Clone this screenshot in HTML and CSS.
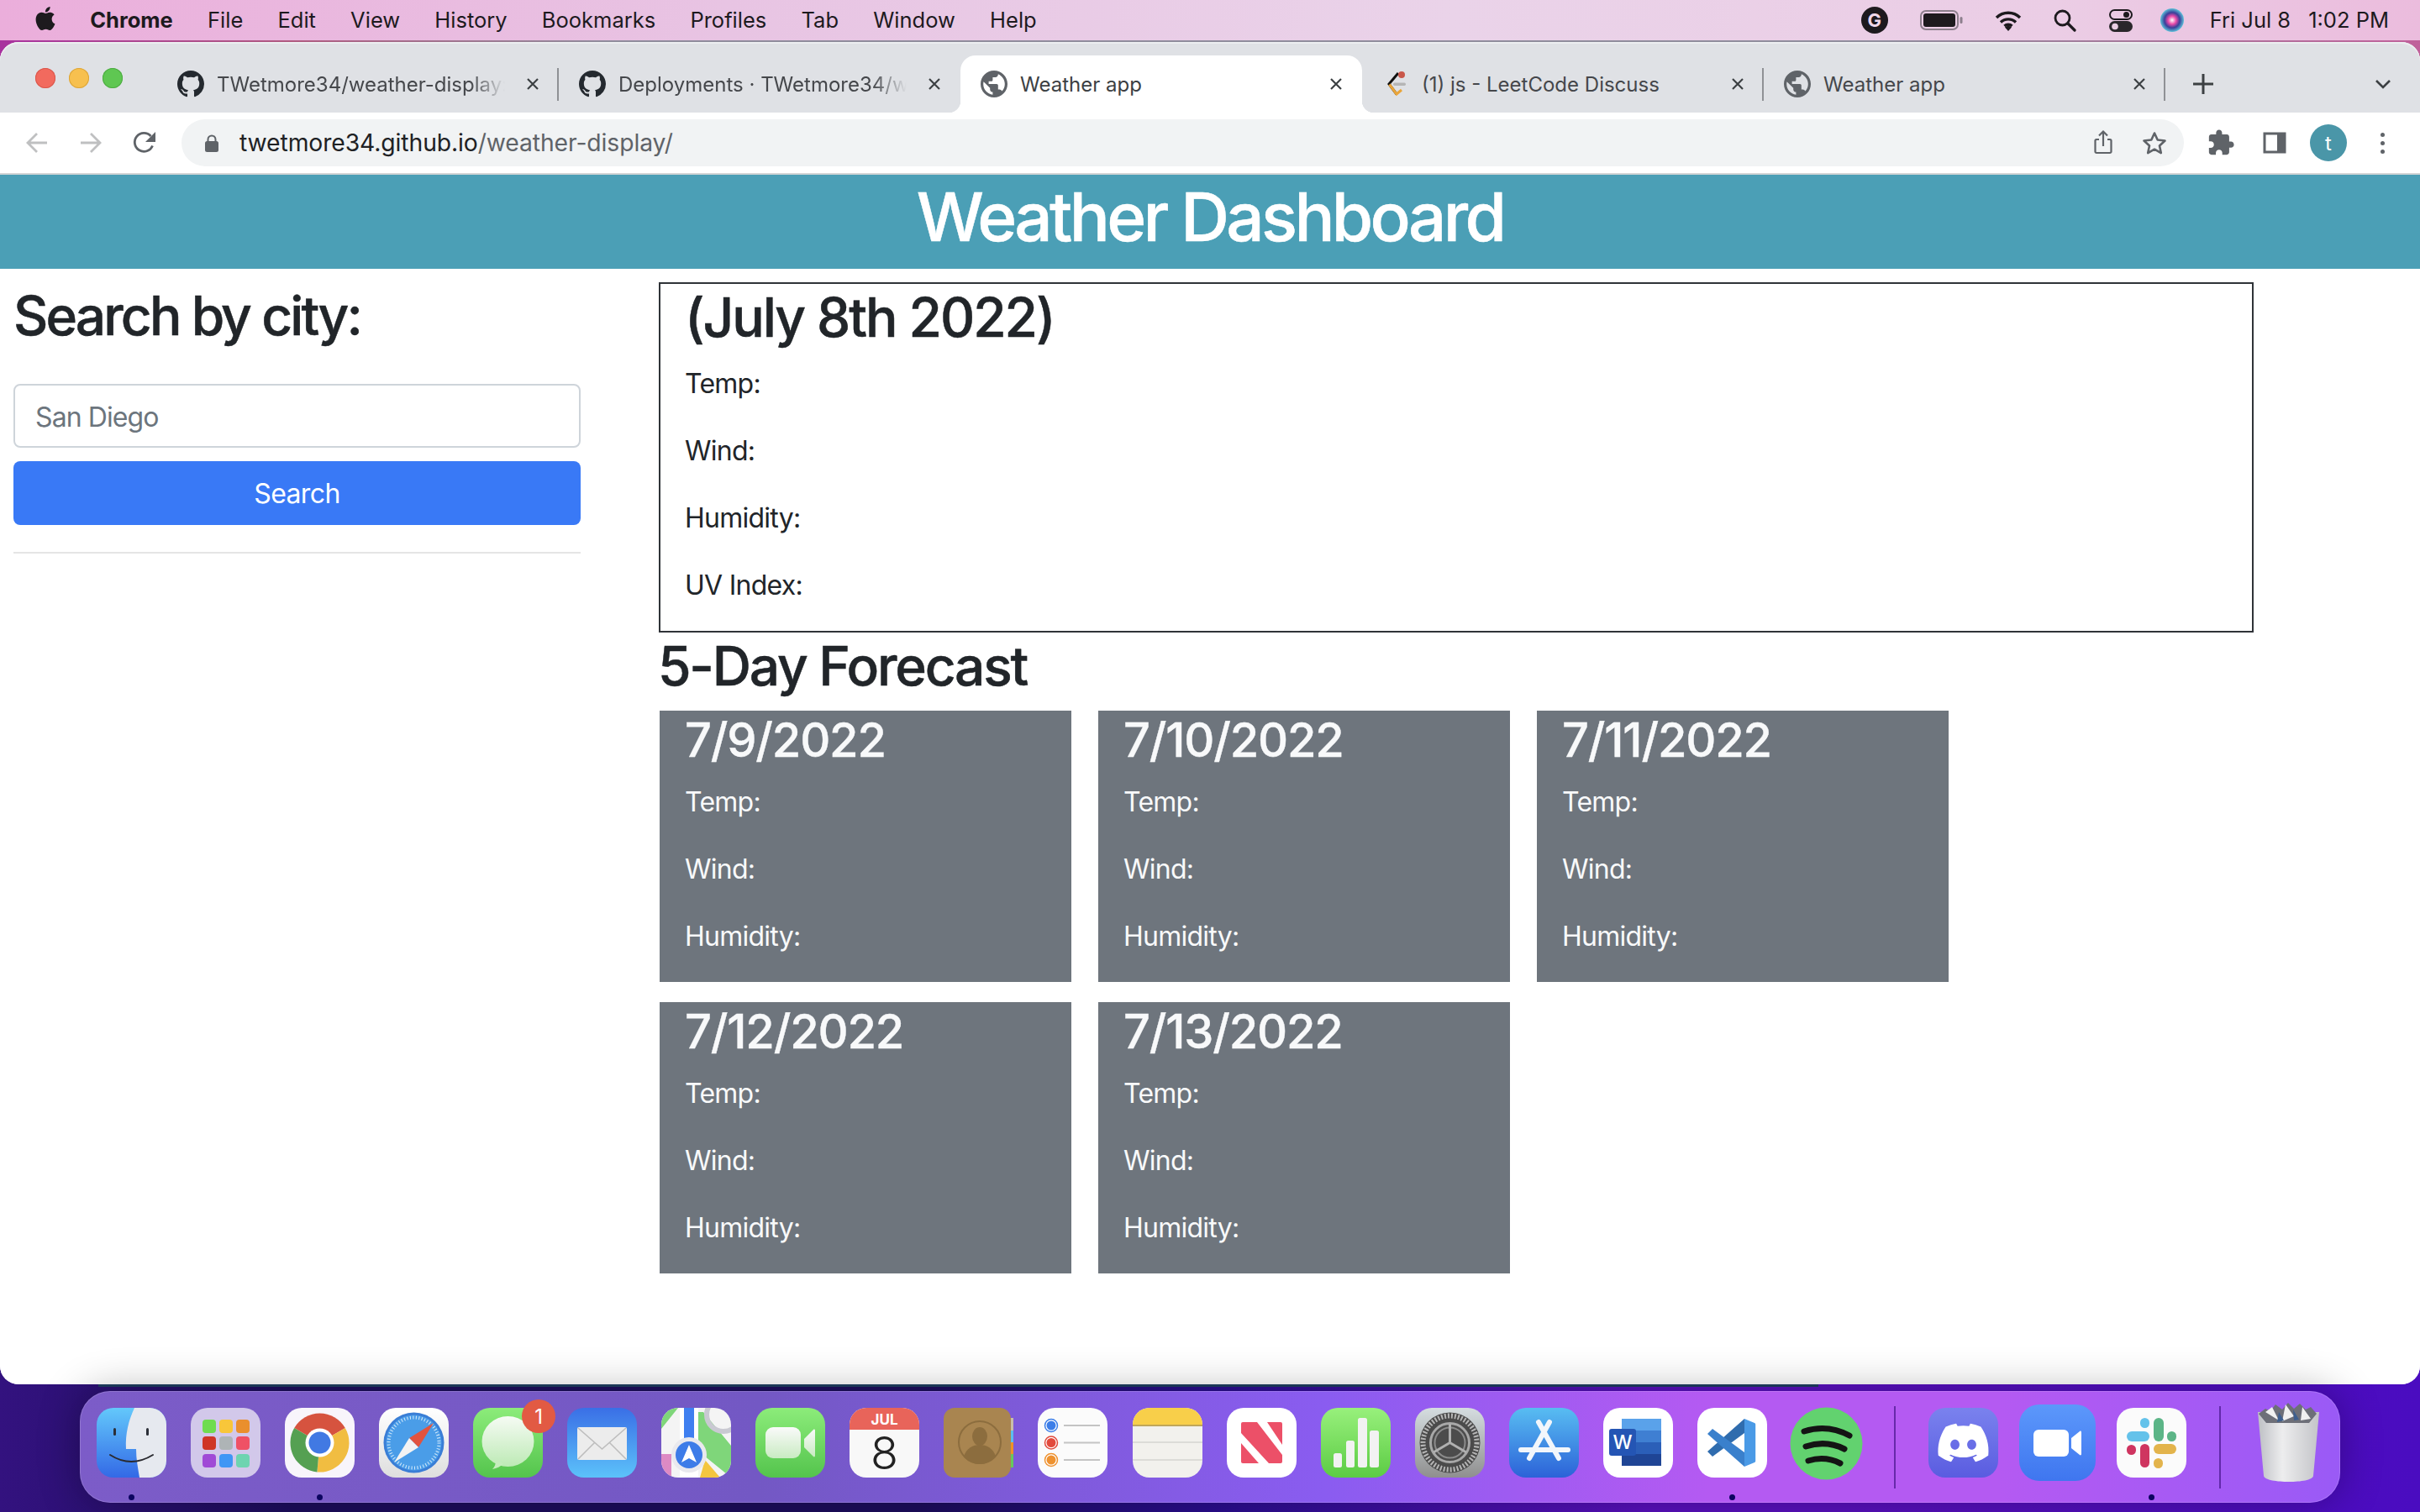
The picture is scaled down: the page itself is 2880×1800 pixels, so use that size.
FILE: index.html
```
<!DOCTYPE html>
<html lang="en">
<head>
<meta charset="utf-8">
<title>Weather app</title>
<link rel="stylesheet" href="styles.css">
</head>
<body>
<header class="menubar">
  <nav class="menus">
    <svg class="apple" viewBox="0 0 24 24"><path d="M12.152 6.896c-.948 0-2.415-1.078-3.96-1.04-2.04.027-3.91 1.183-4.961 3.014-2.117 3.675-.546 9.103 1.519 12.09 1.013 1.454 2.208 3.09 3.792 3.039 1.52-.065 2.09-.987 3.935-.987 1.831 0 2.35.987 3.96.948 1.637-.026 2.676-1.48 3.676-2.948 1.156-1.688 1.636-3.325 1.662-3.415-.039-.013-3.182-1.221-3.22-4.857-.026-3.04 2.48-4.494 2.597-4.559-1.429-2.09-3.623-2.324-4.39-2.376-2-.156-3.675 1.09-4.61 1.09zM15.53 3.83c.843-1.012 1.4-2.427 1.245-3.83-1.207.052-2.662.805-3.532 1.818-.78.896-1.454 2.338-1.273 3.714 1.338.104 2.715-.688 3.559-1.701"/></svg>
    <b class="appname">Chrome</b>
    <span>File</span><span>Edit</span><span>View</span><span>History</span><span>Bookmarks</span><span>Profiles</span><span>Tab</span><span>Window</span><span>Help</span>
  </nav>
  <div class="status">
    <span class="gram">G</span>
    <svg class="st-batt" viewBox="0 0 52 28"><rect x="1" y="3" width="44" height="22" rx="6" fill="none" stroke="#8d7f8d" stroke-width="2"/><rect x="4" y="6" width="38" height="16" rx="3" fill="#1d1a1e"/><rect x="47.500" y="10" width="3" height="8" rx="1.500" fill="#8d7f8d"/></svg>
    <svg class="st-wifi" viewBox="0 0 34 26"><path d="M3 10a20 20 0 0 1 28 0M8 15.500a13 13 0 0 1 18 0M12.500 20a6.500 6.500 0 0 1 9 0" fill="none" stroke="#1d1a1e" stroke-width="3.400"/><path d="M17 26l-4-4.500a5.500 5.500 0 0 1 8 0z" fill="#1d1a1e"/></svg>
    <svg class="st-search" viewBox="0 0 28 28"><circle cx="11.500" cy="11.500" r="8.500" fill="none" stroke="#1d1a1e" stroke-width="2.800"/><path d="M18 18l8 8" stroke="#1d1a1e" stroke-width="3.200" stroke-linecap="round"/></svg>
    <svg class="st-ctrl" viewBox="0 0 30 28"><rect x="2" y="2" width="26" height="11" rx="5.500" fill="none" stroke="#1d1a1e" stroke-width="2"/><circle cx="21.500" cy="7.500" r="3.500" fill="#1d1a1e"/><rect x="1" y="15" width="28" height="13" rx="6.500" fill="#2a272b"/><circle cx="8" cy="21.500" r="3.800" fill="#e9cde2"/></svg>
    <svg class="st-siri" viewBox="0 0 28 28"><defs><radialGradient id="siri"><stop offset="0" stop-color="#fff"/><stop offset=".35" stop-color="#e84aa8"/><stop offset=".65" stop-color="#3a3f9a"/><stop offset="1" stop-color="#5cc0d8"/></radialGradient></defs><circle cx="14" cy="14" r="14" fill="url(#siri)"/></svg>
    <span class="clock">Fri Jul 8</span><span class="clock">1:02 PM</span>
  </div>
</header>

<div class="window">
  <div class="tabstrip">
    <div class="lights"><i class="light red"></i><i class="light yellow"></i><i class="light green"></i></div>
    <div class="tab sep">
      <svg class="favicon" viewBox="0 0 16 16"><path fill="#24292f" d="M8 0C3.58 0 0 3.58 0 8c0 3.54 2.29 6.53 5.47 7.59.4.07.55-.17.55-.38 0-.19-.01-.82-.01-1.49-2.01.37-2.53-.49-2.69-.94-.09-.23-.48-.94-.82-1.13-.28-.15-.68-.52-.01-.53.63-.01 1.08.58 1.23.82.72 1.21 1.87.87 2.33.66.07-.52.28-.87.51-1.07-1.78-.2-3.64-.89-3.64-3.95 0-.87.31-1.59.82-2.15-.08-.2-.36-1.02.08-2.12 0 0 .67-.21 2.2.82.64-.18 1.32-.27 2-.27.68 0 1.36.09 2 .27 1.53-1.04 2.2-.82 2.2-.82.44 1.1.16 1.92.08 2.12.51.56.82 1.27.82 2.15 0 3.07-1.87 3.75-3.65 3.95.29.25.54.73.54 1.48 0 1.07-.01 1.93-.01 2.2 0 .21.15.46.55.38A8.013 8.013 0 0016 8c0-4.42-3.58-8-8-8z"/></svg>
      <span class="tabtitle fade">TWetmore34/weather-display:</span>
      <svg class="tabclose" viewBox="0 0 14 14"><path d="M1 1l12 12M13 1L1 13"/></svg>
    </div>
    <div class="tab">
      <svg class="favicon" viewBox="0 0 16 16"><path fill="#24292f" d="M8 0C3.58 0 0 3.58 0 8c0 3.54 2.29 6.53 5.47 7.59.4.07.55-.17.55-.38 0-.19-.01-.82-.01-1.49-2.01.37-2.53-.49-2.69-.94-.09-.23-.48-.94-.82-1.13-.28-.15-.68-.52-.01-.53.63-.01 1.08.58 1.23.82.72 1.21 1.87.87 2.33.66.07-.52.28-.87.51-1.07-1.78-.2-3.64-.89-3.64-3.95 0-.87.31-1.59.82-2.15-.08-.2-.36-1.02.08-2.12 0 0 .67-.21 2.2.82.64-.18 1.32-.27 2-.27.68 0 1.36.09 2 .27 1.53-1.04 2.2-.82 2.2-.82.44 1.1.16 1.92.08 2.12.51.56.82 1.27.82 2.15 0 3.07-1.87 3.75-3.65 3.95.29.25.54.73.54 1.48 0 1.07-.01 1.93-.01 2.2 0 .21.15.46.55.38A8.013 8.013 0 0016 8c0-4.42-3.58-8-8-8z"/></svg>
      <span class="tabtitle fade">Deployments · TWetmore34/we</span>
      <svg class="tabclose" viewBox="0 0 14 14"><path d="M1 1l12 12M13 1L1 13"/></svg>
    </div>
    <div class="tab active">
      <svg class="favicon" viewBox="2 2 20 20"><path fill="#5f6368" d="M12 2C6.48 2 2 6.48 2 12s4.48 10 10 10 10-4.48 10-10S17.52 2 12 2zm-1 17.930c-3.950-.49-7-3.850-7-7.930 0-.62.08-1.210.21-1.790L9 15v1c0 1.100.9 2 2 2v1.930zm6.900-2.540c-.26-.81-1-1.390-1.900-1.390h-1v-3c0-.55-.45-1-1-1H8v-2h2c.55 0 1-.45 1-1V7h2c1.100 0 2-.9 2-2v-.41c2.930 1.190 5 4.060 5 7.410 0 2.080-.8 3.970-2.100 5.390z"/></svg>
      <span class="tabtitle">Weather app</span>
      <svg class="tabclose" viewBox="0 0 14 14"><path d="M1 1l12 12M13 1L1 13"/></svg>
    </div>
    <div class="tab sep">
      <svg class="favicon" viewBox="0 0 32 32"><path d="M19 3L8 16l9 12" fill="none" stroke="#111" stroke-width="3"/><path d="M8.500 16.500l8.500 11.500 6-5" fill="none" stroke="#e9a53a" stroke-width="3"/><circle cx="23" cy="5" r="4" fill="#c9574a"/><rect x="13" y="14.500" width="15" height="3.500" rx="1.700" fill="#b5b5b5"/></svg>
      <span class="tabtitle">(1) js - LeetCode Discuss</span>
      <svg class="tabclose" viewBox="0 0 14 14"><path d="M1 1l12 12M13 1L1 13"/></svg>
    </div>
    <div class="tab sep">
      <svg class="favicon" viewBox="2 2 20 20"><path fill="#5f6368" d="M12 2C6.48 2 2 6.48 2 12s4.48 10 10 10 10-4.48 10-10S17.52 2 12 2zm-1 17.930c-3.950-.49-7-3.850-7-7.930 0-.62.08-1.210.21-1.790L9 15v1c0 1.100.9 2 2 2v1.930zm6.900-2.540c-.26-.81-1-1.390-1.900-1.390h-1v-3c0-.55-.45-1-1-1H8v-2h2c.55 0 1-.45 1-1V7h2c1.100 0 2-.9 2-2v-.41c2.930 1.190 5 4.060 5 7.410 0 2.080-.8 3.970-2.100 5.390z"/></svg>
      <span class="tabtitle">Weather app</span>
      <svg class="tabclose" viewBox="0 0 14 14"><path d="M1 1l12 12M13 1L1 13"/></svg>
    </div>
    <svg class="newtab" viewBox="0 0 26 26"><path d="M13 1v24M1 13h24"/></svg>
    <svg class="tabmenu" viewBox="0 0 20 12"><path d="M2 2l8 8 8-8"/></svg>
  </div>

  <div class="toolbar">
    <span class="tool"><svg class="ico-nav" viewBox="0 0 28 28"><path d="M26 14H3M14 3L3 14l11 11"/></svg></span>
    <span class="tool"><svg class="ico-nav" viewBox="0 0 28 28"><path d="M2 14h23M14 3l11 11-11 11"/></svg></span>
    <span class="tool"><svg class="ico-reload" viewBox="0 0 28 28"><path d="M23.500 17.500A11 11 0 1 1 21.500 6" fill="none" stroke="#5f6368" stroke-width="2.800"/><path d="M27 1v12H15z" fill="#5f6368"/></svg></span>
    <div class="omnibox">
      <svg class="lock" viewBox="0 0 16 21"><path d="M3.500 9V6a4.500 4.500 0 0 1 9 0v3" fill="none" stroke="#5f6368" stroke-width="2"/><rect y="8" width="16" height="13" rx="2.500" fill="#5f6368"/></svg>
      <span class="url">twetmore34.github.io<span class="urlpath">/weather-display/</span></span>
      <svg class="ico-share" viewBox="0 0 24 30"><path d="M7 12H4a1.500 1.500 0 0 0-1.500 1.500v13A1.500 1.500 0 0 0 4 28h16a1.500 1.500 0 0 0 1.500-1.500v-13A1.500 1.500 0 0 0 20 12h-3M12 20V3M7 7.500L12 2.500l5 5" fill="none" stroke="#5f6368" stroke-width="2.200"/></svg>
      <svg class="ico-star" viewBox="0 0 30 28"><path d="M15 2.500l3.700 8 8.800 1-6.500 6 1.800 8.600-7.800-4.400-7.800 4.400L9 17.500l-6.500-6 8.800-1z" fill="none" stroke="#5f6368" stroke-width="2.600" stroke-linejoin="round"/></svg>
    </div>
    <span class="tool"><svg class="ico-puzzle" viewBox="0 0 24 24"><path fill="#5f6368" d="M20.500 11H19V7c0-1.100-.9-2-2-2h-4V3.500C13 2.120 11.880 1 10.500 1S8 2.120 8 3.500V5H4c-1.100 0-1.990.9-1.990 2v3.800H3.500c1.490 0 2.700 1.210 2.700 2.700s-1.210 2.700-2.700 2.700H2V20c0 1.100.9 2 2 2h3.800v-1.500c0-1.490 1.210-2.700 2.700-2.700 1.490 0 2.700 1.210 2.700 2.700V22H17c1.100 0 2-.9 2-2v-4h1.500c1.380 0 2.500-1.120 2.500-2.500S21.880 11 20.500 11z"/></svg></span>
    <span class="tool"><svg class="ico-side" viewBox="0 0 28 26"><rect x="2" y="2" width="24" height="22" fill="none" stroke="#5f6368" stroke-width="3"/><rect x="17" y="2" width="9" height="22" fill="#5f6368"/></svg></span>
    <span class="tool"><span class="avatar">t</span></span>
    <span class="tool"><span class="dots"><i></i><i></i><i></i></span></span>
  </div>

  <main class="page">
    <div class="site-head"><h1 class="site-title">Weather Dashboard</h1></div>
    <div class="columns">
      <aside class="search-col">
        <h2 class="h2 search-head">Search by city:</h2>
        <input class="city-input" type="text" value="San Diego" aria-label="City">
        <button class="search-btn" type="button">Search</button>
        <hr class="rule">
      </aside>
      <section class="results">
        <div class="today">
          <h2 class="h2 today-head">(July 8th 2022)</h2>
          <p>Temp:</p><p>Wind:</p><p>Humidity:</p><p>UV Index:</p>
        </div>
        <h2 class="h2 forecast-head">5-Day Forecast</h2>
        <div class="cards">
          <article class="card"><h3>7/9/2022</h3><p>Temp:</p><p>Wind:</p><p>Humidity:</p></article>
          <article class="card"><h3>7/10/2022</h3><p>Temp:</p><p>Wind:</p><p>Humidity:</p></article>
          <article class="card"><h3>7/11/2022</h3><p>Temp:</p><p>Wind:</p><p>Humidity:</p></article>
          <article class="card"><h3>7/12/2022</h3><p>Temp:</p><p>Wind:</p><p>Humidity:</p></article>
          <article class="card"><h3>7/13/2022</h3><p>Temp:</p><p>Wind:</p><p>Humidity:</p></article>
        </div>
      </section>
    </div>
  </main>
</div>

<footer class="dock">
  <div class="app run"><svg class="icon" viewBox="0 0 83 83"><defs><linearGradient id="fa" x1="0" y1="0" x2="0" y2="1"><stop offset="0" stop-color="#63c8fb"/><stop offset="1" stop-color="#3369e6"/></linearGradient></defs><rect width="83" height="83" rx="20" fill="url(#fa)"/><path d="M45 0h18a20 20 0 0 1 20 20v43a20 20 0 0 1-20 20H51c-2-12-4-22-4-34H35c-1-18 3-34 10-49z" fill="#e6e9ef"/><rect x="20" y="24" width="3" height="9" rx="1.500" fill="#2b2f38"/><rect x="59" y="24" width="3" height="9" rx="1.500" fill="#2b2f38"/><path d="M16 56q25 16 51 0" fill="none" stroke="#2a2a30" stroke-width="2" stroke-linecap="round"/></svg></div>
  <div class="app"><svg class="icon" viewBox="0 0 83 83"><rect width="83" height="83" rx="20" fill="#d2c8ea"/><rect x="14" y="14" width="16" height="16" rx="4" fill="#6fdc4f"/><rect x="34" y="14" width="16" height="16" rx="4" fill="#f8c63a"/><rect x="54" y="14" width="16" height="16" rx="4" fill="#ea8f2d"/><rect x="14" y="34" width="16" height="16" rx="4" fill="#cf3527"/><rect x="34" y="34" width="16" height="16" rx="4" fill="#aeb4b6"/><rect x="54" y="34" width="16" height="16" rx="4" fill="#ef5165"/><rect x="14" y="55" width="16" height="16" rx="4" fill="#a04ad6"/><rect x="34" y="55" width="16" height="16" rx="4" fill="#3f96f5"/><rect x="54" y="55" width="16" height="16" rx="4" fill="#6ed4b0"/></svg></div>
  <div class="app run"><svg class="icon" viewBox="0 0 83 83"><rect width="83" height="83" rx="20" fill="#f8f5fb"/><path d="M41.500 41.500L11.200 24A35 35 0 0 1 71.800 24z" fill="#d6533f"/><path d="M41.500 41.500L71.800 24A35 35 0 0 1 38.400 76.400z" fill="#f1bd41"/><path d="M41.500 41.500L38.400 76.400A35 35 0 0 1 11.200 24z" fill="#55a052"/><circle cx="41.500" cy="41.500" r="17" fill="#fff"/><circle cx="41.500" cy="41.500" r="13" fill="#4179e3"/></svg></div>
  <div class="app"><svg class="icon" viewBox="0 0 83 83"><defs><linearGradient id="sa" x1="0" y1="0" x2="0" y2="1"><stop offset="0" stop-color="#fff"/><stop offset="1" stop-color="#dedede"/></linearGradient></defs><rect width="83" height="83" rx="20" fill="url(#sa)"/><circle cx="41.500" cy="41.500" r="36" fill="#3a7ed6"/><circle cx="41.500" cy="41.500" r="33" fill="#4a9de8"/><circle cx="41.500" cy="41.500" r="30" fill="none" stroke="#d8ecfb" stroke-width="4" stroke-dasharray="1 2.500"/><path d="M65 18L47 47 36 36z" fill="#e2533f"/><path d="M18 65l18-29 11 11z" fill="#f3f3f3"/></svg></div>
  <div class="app"><svg class="icon" viewBox="0 0 83 83"><defs><linearGradient id="ma" x1="0" y1="0" x2="0" y2="1"><stop offset="0" stop-color="#8cec7a"/><stop offset="1" stop-color="#54c44d"/></linearGradient><linearGradient id="mb" x1="0" y1="0" x2="0" y2="1"><stop offset="0" stop-color="#f6fbf4"/><stop offset="1" stop-color="#bdeab5"/></linearGradient></defs><rect width="83" height="83" rx="20" fill="url(#ma)"/><ellipse cx="41.500" cy="40" rx="31" ry="30" fill="url(#mb)"/><path d="M27 62c0 5-1 8-4 11 5-1 10-3 13-7z" fill="#c5ecbd"/></svg><span class="badge">1</span></div>
  <div class="app"><svg class="icon" viewBox="0 0 83 83"><defs><linearGradient id="la" x1="0" y1="0" x2="0" y2="1"><stop offset="0" stop-color="#3a6fe6"/><stop offset="1" stop-color="#5cc2fa"/></linearGradient></defs><rect width="83" height="83" rx="20" fill="url(#la)"/><rect x="12" y="23" width="59" height="39" rx="2" fill="#ececec"/><path d="M13 24l28.500 25L70 24M13 61l20-20M70 61L50 41" fill="none" stroke="#bdbdbd" stroke-width="1.600"/></svg></div>
  <div class="app"><svg class="icon" viewBox="0 0 83 83"><defs><clipPath id="mc"><rect width="83" height="83" rx="20"/></clipPath></defs><g clip-path="url(#mc)"><rect width="83" height="83" fill="#f4f4f4"/><path d="M0 0h20L0 25zM30 40L83 83V45L50 5H42z" fill="#7fd67a"/><path d="M0 55h12v28H0z" fill="#dd8ac4"/><path d="M52 62l18 21H46z" fill="#f4c63f"/><rect x="22" y="0" width="22" height="83" fill="#fff"/><rect x="27" y="0" width="12" height="40" fill="#3f7ff0"/><circle cx="74" cy="8" r="20" fill="none" stroke="#c9c9d2" stroke-width="6"/><circle cx="33" cy="56" r="21" fill="#e9e9ee"/><circle cx="33" cy="56" r="16" fill="#3d7ce8"/><path d="M33 44l9 21-9-5-9 5z" fill="#fff"/></g></svg></div>
  <div class="app"><svg class="icon" viewBox="0 0 83 83"><defs><linearGradient id="fb" x1="0" y1="0" x2="0" y2="1"><stop offset="0" stop-color="#8cec7a"/><stop offset="1" stop-color="#54c44d"/></linearGradient><linearGradient id="fc" x1="0" y1="0" x2="0" y2="1"><stop offset="0" stop-color="#fafafa"/><stop offset="1" stop-color="#c9ebc2"/></linearGradient></defs><rect width="83" height="83" rx="20" fill="url(#fb)"/><rect x="12" y="23" width="42" height="37" rx="9" fill="url(#fc)"/><path d="M58 37l11-11c1-1 2 0 2 1v30c0 1-1 2-2 1L58 47z" fill="url(#fc)"/></svg></div>
  <div class="app"><svg class="icon" viewBox="0 0 83 83"><defs><clipPath id="ca"><rect width="83" height="83" rx="20"/></clipPath></defs><g clip-path="url(#ca)"><rect width="83" height="83" fill="#f8f8f8"/><rect width="83" height="26" fill="#e8645a"/></g><text class="cal-month" x="41.500" y="20" text-anchor="middle">JUL</text><text class="cal-day" x="41.500" y="73" text-anchor="middle">8</text></svg></div>
  <div class="app"><svg class="icon" viewBox="0 0 83 83"><rect x="70" y="12" width="13" height="17" fill="#c9bfa8"/><rect x="70" y="27" width="13" height="16" fill="#5bbdf0"/><rect x="70" y="41" width="13" height="16" fill="#ef9228"/><rect x="70" y="55" width="13" height="16" fill="#66c85e"/><rect x="0" y="0" width="80" height="83" rx="13" fill="#a98550"/><circle cx="43" cy="41" r="25" fill="none" stroke="#8c6d3e" stroke-width="2"/><ellipse cx="43" cy="34" rx="9" ry="11" fill="#8c6d3e"/><path d="M24 58c3-10 11-14 19-14s16 4 19 14c-5 5-12 9-19 9s-14-4-19-9z" fill="#8c6d3e"/></svg></div>
  <div class="app"><svg class="icon" viewBox="0 0 83 83"><rect width="83" height="83" rx="20" fill="#fbfbfb"/><circle cx="16" cy="21" r="7.500" fill="#fff" stroke="#3c7ee8" stroke-width="1.500"/><circle cx="16" cy="21" r="5.500" fill="#3c7ee8"/><circle cx="16" cy="41.500" r="7.500" fill="#fff" stroke="#e24a3c" stroke-width="1.500"/><circle cx="16" cy="41.500" r="5.500" fill="#e24a3c"/><circle cx="16" cy="62" r="7.500" fill="#fff" stroke="#ee9230" stroke-width="1.500"/><circle cx="16" cy="62" r="5.500" fill="#ee9230"/><path d="M31 21h43M31 41.500h43M31 62h43" stroke="#c4c4c4" stroke-width="2"/></svg></div>
  <div class="app"><svg class="icon" viewBox="0 0 83 83"><defs><clipPath id="na"><rect width="83" height="83" rx="20"/></clipPath></defs><g clip-path="url(#na)"><rect width="83" height="83" fill="#f2f1ed"/><rect width="83" height="20" fill="#f8cf4a"/><rect y="20" width="83" height="2" fill="#bfa75a"/><path d="M0 41h83M0 62h83" stroke="#dcdcd8" stroke-width="2"/></g></svg></div>
  <div class="app"><svg class="icon" viewBox="0 0 83 83"><rect width="83" height="83" rx="20" fill="#fff"/><rect x="17" y="17" width="49" height="49" rx="2" fill="#ec5068"/><path d="M36 17h12l18 27v12zM17 30l33 36H38L17 42z" fill="#fff"/></svg></div>
  <div class="app"><svg class="icon" viewBox="0 0 83 83"><defs><linearGradient id="nb" x1="0" y1="0" x2="0" y2="1"><stop offset="0" stop-color="#98f07c"/><stop offset="1" stop-color="#5ccc44"/></linearGradient></defs><rect width="83" height="83" rx="20" fill="url(#nb)"/><rect x="15" y="54" width="10" height="17" rx="2.500" fill="#f2f2f2"/><rect x="30" y="39" width="10" height="32" rx="2.500" fill="#f2f2f2"/><rect x="44" y="12" width="11" height="59" rx="2.500" fill="#f2f2f2"/><rect x="58" y="27" width="11" height="44" rx="2.500" fill="#f2f2f2"/></svg></div>
  <div class="app"><svg class="icon" viewBox="0 0 83 83"><defs><linearGradient id="ga" x1="0" y1="0" x2="0" y2="1"><stop offset="0" stop-color="#d5dde0"/><stop offset="1" stop-color="#8f8f8f"/></linearGradient></defs><rect width="83" height="83" rx="20" fill="url(#ga)"/><circle cx="41.500" cy="41.500" r="36" fill="#4a4a4a"/><circle cx="41.500" cy="41.500" r="32" fill="none" stroke="#b5b5b5" stroke-width="6" stroke-dasharray="2 2"/><circle cx="41.500" cy="41.500" r="27" fill="#4c4c4c"/><circle cx="41.500" cy="41.500" r="23" fill="none" stroke="#a8a8a8" stroke-width="3"/><circle cx="41.500" cy="41.500" r="18" fill="none" stroke="#8c8c8c" stroke-width="2"/><path d="M41.500 41.500V19M41.500 41.500L61 53M41.500 41.500L22 53" stroke="#b0b0b0" stroke-width="3"/></svg></div>
  <div class="app"><svg class="icon" viewBox="0 0 83 83"><defs><linearGradient id="aa" x1="0" y1="0" x2="0" y2="1"><stop offset="0" stop-color="#58bdf2"/><stop offset="1" stop-color="#2c62d8"/></linearGradient></defs><rect width="83" height="83" rx="20" fill="url(#aa)"/><path d="M48 17L24 60M35 17l24 43M14 50h56" stroke="#f2f6fb" stroke-width="6" stroke-linecap="round" fill="none"/></svg></div>
  <div class="app"><svg class="icon" viewBox="0 0 83 83"><rect width="83" height="83" rx="20" fill="#fff"/><rect x="22" y="13" width="47" height="14" fill="#5aa2ea"/><rect x="22" y="27" width="47" height="14" fill="#3f7fd2"/><rect x="22" y="41" width="47" height="14" fill="#2b5fb8"/><rect x="22" y="55" width="47" height="14" fill="#1f4595"/><rect x="7" y="25" width="32" height="32" rx="3" fill="#2455b4"/><text class="word-w" x="23" y="49" text-anchor="middle">W</text></svg></div>
  <div class="app run"><svg class="icon" viewBox="0 0 83 83"><rect width="83" height="83" rx="20" fill="#fff"/><path d="M56 13l12 5c.8.400 1.200 1 1.200 2v43c0 1-.4 1.600-1.200 2l-12 5z" fill="#4a9ae6"/><path d="M56 13L12 52l6 6L56 30z" fill="#2f6cae"/><path d="M56 70L12 31l6-6L56 53z" fill="#3a80cc"/></svg></div>
  <div class="app"><svg class="icon oversize" viewBox="0 0 87 87"><circle cx="43.500" cy="43.500" r="43" fill="#62d26f"/><path d="M17 29q28-9 54 5M19 47q24-8 46 3M22 64q20-6 38 3" fill="none" stroke="#141414" stroke-width="7" stroke-linecap="round"/></svg></div>
  <i class="dock-sep"></i>
  <div class="app"><svg class="icon" viewBox="0 0 83 83"><defs><linearGradient id="da" x1="0" y1="0" x2="0" y2="1"><stop offset="0" stop-color="#7a82ee"/><stop offset="1" stop-color="#5a5ce0"/></linearGradient></defs><rect width="83" height="83" rx="20" fill="url(#da)"/><g transform="translate(11.500 11.500) scale(2.500)"><path fill="#fff" d="M20.317 4.3698a19.7913 19.7913 0 00-4.8851-1.5152.0741.0741 0 00-.0785.0371c-.211.3753-.4447.8648-.6083 1.2495-1.8447-.2762-3.68-.2762-5.4868 0-.1636-.3933-.4058-.8742-.6177-1.2495a.077.077 0 00-.0785-.037 19.7363 19.7363 0 00-4.8852 1.515.0699.0699 0 00-.0321.0277C.5334 9.0458-.319 13.5799.0992 18.0578a.0824.0824 0 00.0312.0561c2.0528 1.5076 4.0413 2.4228 5.9929 3.0294a.0777.0777 0 00.0842-.0276c.4616-.6304.8731-1.2952 1.226-1.9942a.076.076 0 00-.0416-.1057c-.6528-.2476-1.2743-.5495-1.8722-.8923a.077.077 0 01-.0076-.1277c.1258-.0943.2517-.1923.3718-.2914a.0743.0743 0 01.0776-.0105c3.9278 1.7933 8.18 1.7933 12.0614 0a.0739.0739 0 01.0785.0095c.1202.099.246.1981.3728.2924a.077.077 0 01-.0066.1276 12.2986 12.2986 0 01-1.8732.8914.0766.0766 0 00-.0407.1067c.3604.698.7719 1.3628 1.225 1.9932a.076.076 0 00.0842.0286c1.961-.6067 3.9495-1.5219 6.0023-3.0294a.077.077 0 00.0313-.0552c.5004-5.177-.8382-9.6739-3.5485-13.6604a.061.061 0 00-.0312-.0286zM8.02 15.3312c-1.1825 0-2.1569-1.0857-2.1569-2.419 0-1.3332.9555-2.4189 2.157-2.4189 1.2108 0 2.1757 1.0952 2.1568 2.419 0 1.3332-.9555 2.4189-2.1569 2.4189zm7.9748 0c-1.1825 0-2.1569-1.0857-2.1569-2.419 0-1.3332.9554-2.4189 2.1569-2.4189 1.2108 0 2.1757 1.0952 2.1568 2.419 0 1.3332-.946 2.4189-2.1568 2.4189Z"/></g></svg></div>
  <div class="app"><svg class="icon oversize-z" viewBox="0 0 91 91"><defs><linearGradient id="za" x1="0" y1="0" x2="0" y2="1"><stop offset="0" stop-color="#5c98fb"/><stop offset="1" stop-color="#3f76ef"/></linearGradient></defs><rect width="91" height="91" rx="24" fill="url(#za)"/><rect x="17" y="30" width="42" height="32" rx="6" fill="#fff"/><path d="M62 40l10-8c1-1 2 0 2 1v26c0 1-1 2-2 1l-10-8z" fill="#fff"/></svg></div>
  <div class="app run"><svg class="icon" viewBox="0 0 83 83"><rect width="83" height="83" rx="20" fill="#fbfbfb"/><rect x="28" y="12" width="11" height="12" rx="5.500" fill="#64c2ea"/><rect x="12" y="28" width="27" height="12" rx="6" fill="#64c2ea"/><rect x="44" y="12" width="12" height="28" rx="6" fill="#5cb587"/><rect x="60" y="28" width="11" height="12" rx="5.500" fill="#5cb587"/><rect x="12" y="44" width="11" height="12" rx="5.500" fill="#cf3560"/><rect x="28" y="43" width="11" height="28" rx="5.500" fill="#cf3560"/><rect x="44" y="43" width="27" height="12" rx="6" fill="#e3b44c"/><rect x="44" y="60" width="11" height="12" rx="5.500" fill="#e3b44c"/></svg></div>
  <i class="dock-sep"></i>
  <div class="app"><svg class="icon trash" viewBox="0 0 83 95"><defs><linearGradient id="ta" x1="0" y1="0" x2="1" y2="0"><stop offset="0" stop-color="#bdbfc4"/><stop offset=".4" stop-color="#ededee"/><stop offset="1" stop-color="#c3c4c8"/></linearGradient></defs><path d="M5 12h73l-7 76c-1 5-15 7-29 7s-29-2-30-7z" fill="url(#ta)"/><path d="M6 14l8-6 6 3 6-8 8 6 7-8 7 7 7-6 7 7 6-3 7 8-9 11H15z" fill="#6d6f78"/><path d="M14 12l8-6 8 16zM38 3l10 14-14 6zM58 6l10 14-12 2z" fill="#f0f0f0"/><path d="M30 12l6 10-8 2zM47 9l7 12-6 1z" fill="#3d5e8e"/></svg></div>
</footer>
</body>
</html>
```
FILE: styles.css
```
* { box-sizing: border-box; }
html, body { margin: 0; height: 100%; }
body {
  width: 2880px;
  height: 1800px;
  overflow: hidden;
  display: flex;
  flex-direction: column;
  font-family: Inter, "Liberation Sans", sans-serif;
  color: #212529;
  background:
    linear-gradient(90deg, #a8329e 0, #b05a80 12%, #8f8c9c 25%, #8f8c9c 78%, #c0609a 100%) top / 100% 80px no-repeat,
    linear-gradient(90deg, #33127f 0, #1d0d5e 12%, #1d0d5e 38%, #2a0d90 50%, #5a10c0 68%, #5a10c0 76%, #4a0cc0 100%);
}

/* macOS menu bar */
.menubar {
  height: 48px;
  margin-bottom: 2px;
  flex: none;
  display: flex;
  justify-content: space-between;
  align-items: center;
  padding: 0 37px 1px 40px;
  font-size: 25.500px;
  color: #1d1a1e;
  background: linear-gradient(90deg, #ebaedb 0, #e8c4e3 30%, #ead3e9 60%, #ebcde5 85%, #ebbcdd 100%);
}
.menus { display: flex; align-items: center; gap: 41.200px; }
.apple { width: 28px; height: 32px; fill: #1d1a1e; margin-right: -2px; margin-top: -4px; }
.appname { font-weight: 700; }
.status { display: flex; align-items: center; }
.gram {
  width: 32px; height: 32px; border-radius: 50%;
  background: #1d1a1e; color: #f0d8ea;
  display: flex; align-items: center; justify-content: center;
  font-weight: 700; font-size: 22px;
  margin-right: 38px;
}
.st-batt { width: 52px; height: 28px; margin-right: 36px; }
.st-wifi { width: 34px; height: 26px; margin-right: 36px; }
.st-search { width: 28px; height: 28px; margin-right: 38px; }
.st-ctrl { width: 30px; height: 28px; margin-right: 32px; }
.st-siri { width: 28px; height: 28px; margin-right: 31px; }
.clock + .clock { margin-left: 21px; }

/* browser window */
.window {
  height: 1598px;
  flex: none;
  position: relative;
  background: #fff;
  border-radius: 22px;
  display: flex;
  flex-direction: column;
}
.window::after {
  content: "";
  position: absolute;
  top: 100%;
  left: 117px;
  right: 716px;
  height: 3px;
  background: #1f3f62;
}
.tabstrip {
  height: 84px;
  flex: none;
  display: flex;
  align-items: flex-end;
  background: #dfe1e5;
  border-radius: 22px 22px 0 0;
  box-shadow: inset 0 2px 0 #eceef0;
}
.lights { width: 187px; height: 84px; display: flex; gap: 16px; padding: 31px 0 0 42px; flex: none; }
.light { width: 24px; height: 24px; border-radius: 50%; }
.red { background: #f26a5e; box-shadow: inset 0 0 0 1px #d9574c; }
.yellow { background: #f7c04f; box-shadow: inset 0 0 0 1px #dca53a; }
.green { background: #5fc752; box-shadow: inset 0 0 0 1px #4dab42; }

.tab {
  width: 478px;
  height: 68px;
  flex: none;
  display: flex;
  align-items: center;
  padding-left: 24px;
  position: relative;
  font-size: 24px;
  color: #45474b;
}
.tab.sep::after {
  content: "";
  position: absolute;
  right: 0;
  top: 15px;
  width: 2px;
  height: 39px;
  background: #8f9195;
}
.tab.active { background: #fff; border-radius: 18px 18px 0 0; color: #3c4043; }
.tab.active::before, .tab.active::after {
  content: "";
  position: absolute;
  bottom: 0;
  width: 14px;
  height: 14px;
}
.tab.active::before { left: -14px; background: radial-gradient(circle at 0 0, transparent 14px, #fff 14.500px); }
.tab.active::after { right: -14px; background: radial-gradient(circle at 100% 0, transparent 14px, #fff 14.500px); }
.favicon { width: 32px; height: 32px; flex: none; margin-right: 15px; }
.tabtitle { width: 343px; flex: none; white-space: nowrap; }
.tabtitle.fade { -webkit-mask-image: linear-gradient(90deg, #000 88%, transparent 100%); mask-image: linear-gradient(90deg, #000 88%, transparent 100%); }
.tabclose { width: 14px; height: 14px; flex: none; margin-left: 26px; fill: none; stroke: #3c4043; stroke-width: 2.200; }
.newtab { width: 26px; height: 26px; margin: 0 0 21px 32px; fill: none; stroke: #3c4043; stroke-width: 3; flex: none; }
.tabmenu { width: 20px; height: 12px; margin: 0 34px 28px auto; fill: none; stroke: #3c4043; stroke-width: 2.600; flex: none; }

.toolbar {
  height: 74px;
  flex: none;
  display: flex;
  align-items: center;
  padding: 0 13px 0 12px;
  border-bottom: 2px solid #d3d5d6;
  background: #fff;
}
.tool { width: 64px; height: 44px; flex: none; display: flex; align-items: center; justify-content: center; }
.ico-nav { width: 28px; height: 28px; fill: none; stroke: #bfc0c1; stroke-width: 2.800; }
.ico-reload { width: 28px; height: 28px; }
.omnibox {
  flex: 1;
  height: 56px;
  margin: 0 12px;
  border-radius: 28px;
  background: #f1f3f4;
  display: flex;
  align-items: center;
  padding: 0 20px 0 28px;
}
.lock { width: 16px; height: 21px; margin-right: 25px; flex: none; }
.url { font-size: 28.300px; color: #202124; flex: 1; letter-spacing: -.1px; }
.urlpath { color: #5f6368; }
.ico-share { width: 24px; height: 30px; margin-right: 34px; margin-top: -2px; }
.ico-star { width: 30px; height: 28px; }
.ico-puzzle { width: 34px; height: 34px; }
.ico-side { width: 28px; height: 26px; }
.avatar {
  width: 44px; height: 44px; border-radius: 50%;
  background: #4a96a8; color: #fff;
  display: flex; align-items: center; justify-content: center;
  font-size: 24px;
}
.dots { display: flex; flex-direction: column; gap: 5px; }
.dots i { width: 5px; height: 5px; border-radius: 50%; background: #5f6368; }

/* the web page */
.page { flex: 1; background: #fff; border-radius: 0 0 22px 22px; }
.site-head { height: 112px; padding-top: 2px; background: #4b9fb6; display: flex; justify-content: center; }
.site-title { margin: 0; font-size: 80px; line-height: 96px; font-weight: 500; color: #fff; letter-spacing: -3.700px; -webkit-text-stroke: .5px #fff; }
.columns { display: flex; padding: 16px 0 0 16px; }
.search-col { width: 675px; flex: none; margin-right: 93px; }
.h2 { margin: 0 0 14px; padding-top: 2px; font-size: 64px; line-height: 76.800px; font-weight: 500; color: #212529; -webkit-text-stroke: .5px #212529; }
.search-head { margin-bottom: 42px; letter-spacing: -2.900px; }
.today-head { letter-spacing: -2.050px; }
.forecast-head { margin-left: -1px; letter-spacing: -2.200px; }
.city-input {
  display: block; width: 100%; height: 76px;
  padding: 14px 24px 10px;
  font: 400 32px/48px Inter, "Liberation Sans", sans-serif;
  color: #6c757d;
  background: #fff;
  border: 2px solid #ced4da;
  border-radius: 8px;
  letter-spacing: -.9px;
}
.search-btn {
  display: block; width: 100%; height: 76px;
  margin-top: 16px;
  padding-top: 3px;
  font: 400 32px/48px Inter, "Liberation Sans", sans-serif;
  color: #fff;
  background: #3979f6;
  border: 0;
  border-radius: 8px;
  letter-spacing: -.6px;
}
.rule { margin: 32px 0 0; border: 0; height: 2px; background: #e5e5e5; }
.results { width: 1898px; flex: none; }
.today { border: 2px solid #2f3338; padding: 0 29px; height: 417px; }
.today p, .card p { margin: 0 0 30px; padding-top: 2px; font-size: 32px; line-height: 48px; letter-spacing: -.75px; }
.cards { display: grid; grid-template-columns: repeat(3, 490px); gap: 24px 32px; padding-left: 1px; }
.card { height: 323px; background: #6e757d; color: #f8f9fa; padding: 0 30px; }
.card h3 { margin: 0 0 14px; padding-top: 2px; font-size: 56px; line-height: 67.200px; font-weight: 500; letter-spacing: -1.200px; -webkit-text-stroke: .4px #f8f9fa; }

/* dock */
.dock {
  margin: 8px 95px 0;
  height: 133px;
  flex: none;
  position: relative;
  display: flex;
  gap: 29.060px;
  padding: 20px 20px 0;
  border-radius: 36px;
  background: linear-gradient(90deg, #7c5cc8 0, #7358c4 30%, #8a5cf0 55%, #b45af2 72%, #b45af2 85%, #9a5af6 100%);
  box-shadow: inset 0 0 0 1px rgba(255,255,255,.16), 0 0 50px rgba(0,0,0,.3);
}
.app { width: 83px; height: 83px; flex: none; position: relative; }
.icon { display: block; width: 83px; height: 83px; overflow: visible; }
.oversize { width: 87px; height: 87px; margin-left: -2px; margin-top: -1px; }
.oversize-z { width: 91px; height: 91px; margin-left: -4px; margin-top: -4px; }
.trash { height: 95px; margin-top: -7px; }
.app.run::after {
  content: "";
  position: absolute;
  left: 38px; top: 103px;
  width: 7px; height: 7px;
  border-radius: 50%;
  background: #0c0560;
}
.badge {
  position: absolute;
  left: 58px; top: -10px;
  width: 40px; height: 40px;
  border-radius: 50%;
  background: #e25a43;
  color: #fff;
  font-size: 24px;
  display: flex; align-items: center; justify-content: center;
}
.dock-sep { width: 2px; height: 98px; flex: none; margin: -2px 10px 0; background: rgba(70,20,140,.7); }
.cal-month { font: 700 17px Inter, "Liberation Sans", sans-serif; fill: #fff; }
.cal-day { font: 300 54px Inter, "Liberation Sans", sans-serif; fill: #222; }
.word-w { font: 500 23px Inter, "Liberation Sans", sans-serif; fill: #fff; }
```
